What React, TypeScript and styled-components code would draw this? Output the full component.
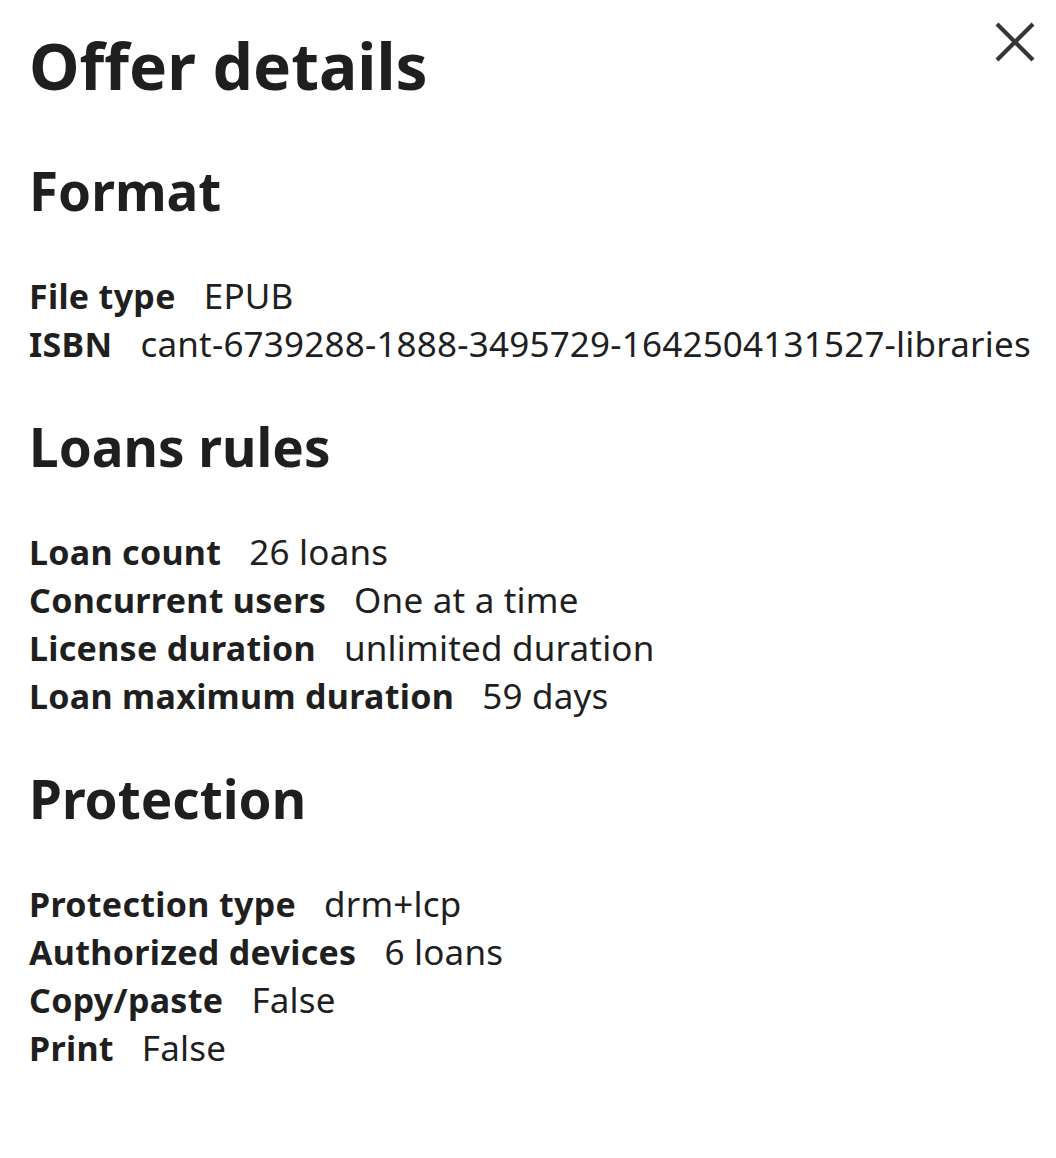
import React from "react";
import styled, { createGlobalStyle } from "styled-components";

const GlobalStyle = createGlobalStyle`
  html, body {
    margin: 0;
    padding: 0;
    background: #ffffff;
  }
  body {
    font-family: "Noto Sans", "Open Sans", sans-serif;
    color: #1f1f1f;
  }
`;

const Panel = styled.div`
  position: relative;
  width: 1056px;
  min-height: 1158px;
  box-sizing: border-box;
  padding: 26px 20px 40px 29px;
  display: flex;
  flex-direction: column;
`;

const Title = styled.h1`
  margin: 0 0 6px 0;
  font-size: 64px;
  line-height: 80px;
  font-weight: 700;
  color: #1f1f1f;
`;

const CloseButton = styled.button`
  position: absolute;
  top: 22px;
  right: 21px;
  width: 40px;
  height: 40px;
  padding: 0;
  border: none;
  background: transparent;
  display: flex;
  align-items: center;
  justify-content: center;
  cursor: pointer;
`;

const Section = styled.section`
  margin-top: 47px;
`;

const SectionTitle = styled.h2`
  margin: 0 0 49px 0;
  font-size: 53px;
  line-height: 64px;
  font-weight: 700;
  color: #1f1f1f;
`;

const List = styled.dl`
  margin: 0;
  display: flex;
  flex-direction: column;
`;

const Row = styled.div`
  display: flex;
  align-items: baseline;
  gap: 28px;
  line-height: 48px;
  white-space: nowrap;
`;

const Label = styled.dt`
  font-size: 34px;
  letter-spacing: 0.3px;
  font-weight: 700;
  color: #1f1f1f;
`;

const Value = styled.dd`
  margin: 0;
  font-size: 35px;
  letter-spacing: 0.2px;
  font-weight: 400;
  color: #1f1f1f;
`;

type Item = { label: string; value: string };

const sections: { title: string; items: Item[] }[] = [
  {
    title: "Format",
    items: [
      { label: "File type", value: "EPUB" },
      { label: "ISBN", value: "cant-6739288-1888-3495729-1642504131527-libraries" },
    ],
  },
  {
    title: "Loans rules",
    items: [
      { label: "Loan count", value: "26 loans" },
      { label: "Concurrent users", value: "One at a time" },
      { label: "License duration", value: "unlimited duration" },
      { label: "Loan maximum duration", value: "59 days" },
    ],
  },
  {
    title: "Protection",
    items: [
      { label: "Protection type", value: "drm+lcp" },
      { label: "Authorized devices", value: "6 loans" },
      { label: "Copy/paste", value: "False" },
      { label: "Print", value: "False" },
    ],
  },
];

export default function App() {
  return (
    <>
      <GlobalStyle />
      <Panel>
        <CloseButton aria-label="Close">
          <svg width="40" height="40" viewBox="0 0 40 40">
            <path d="M2 2 L38 38 M38 2 L2 38" stroke="#363636" strokeWidth="4.2" />
          </svg>
        </CloseButton>
        <Title>Offer details</Title>
        {sections.map((s) => (
          <Section key={s.title}>
            <SectionTitle>{s.title}</SectionTitle>
            <List>
              {s.items.map((it) => (
                <Row key={it.label}>
                  <Label>{it.label}</Label>
                  <Value>{it.value}</Value>
                </Row>
              ))}
            </List>
          </Section>
        ))}
      </Panel>
    </>
  );
}
